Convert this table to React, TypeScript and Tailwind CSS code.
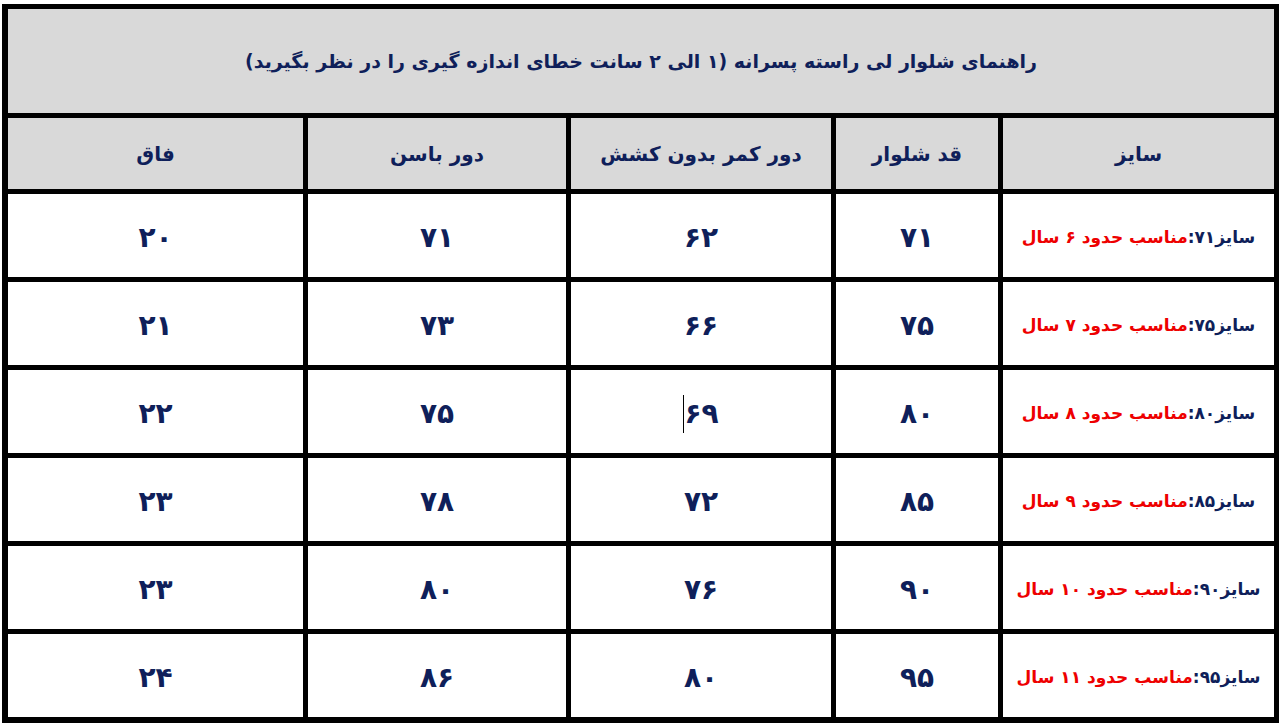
import React from "react";

const navy = "text-[#0f1f5a]";

const rows = [
  { size: "۷۱", age: "۶", len: "۷۱", waist: "۶۲", hip: "۷۱", rise: "۲۰" },
  { size: "۷۵", age: "۷", len: "۷۵", waist: "۶۶", hip: "۷۳", rise: "۲۱" },
  { size: "۸۰", age: "۸", len: "۸۰", waist: "۶۹", hip: "۷۵", rise: "۲۲" },
  { size: "۸۵", age: "۹", len: "۸۵", waist: "۷۲", hip: "۷۸", rise: "۲۳" },
  { size: "۹۰", age: "۱۰", len: "۹۰", waist: "۷۶", hip: "۸۰", rise: "۲۳" },
  { size: "۹۵", age: "۱۱", len: "۹۵", waist: "۸۰", hip: "۸۶", rise: "۲۴" },
];

const headers = ["سایز", "قد شلوار", "دور کمر بدون کشش", "دور باسن", "فاق"];

export default function App() {
  return (
    <div
      className="w-[1280px] h-[728px] bg-white pt-[4px] pl-[2px]"
      style={{ fontFamily: '"DejaVu Sans", sans-serif' }}
    >
      <div
        dir="rtl"
        className="w-[1277px] h-[719px] bg-black p-[5px] grid grid-cols-[271px_162px_260px_258px_295px] grid-rows-[104px_71px_83px_83px_83px_83px_83px_83px] gap-[5px]"
      >
        <div className={`col-span-5 bg-[#d9d9d9] flex items-center justify-center font-bold text-[19px] tracking-[-0.5px] ${navy}`}>
          راهنمای شلوار لی راسته پسرانه (۱ الی ۲ سانت خطای اندازه گیری را در نظر بگیرید)
        </div>
        {headers.map((h) => (
          <div
            key={h}
            className={`bg-[#d9d9d9] flex items-center justify-center font-bold text-[20px] ${navy}`}
          >
            {h}
          </div>
        ))}
        {rows.map((r, i) => (
          <React.Fragment key={i}>
            <div className="bg-white flex items-center justify-center pt-[5px] font-bold text-[17px] tracking-[-0.5px]">
              <span className={navy}>سایز{r.size}:</span>
              <span className="text-[#ee0000]">مناسب حدود {r.age} سال</span>
            </div>
            <div className={`bg-white flex items-center justify-center pt-[5px] font-bold text-[28px] ${navy}`}>
              {r.len}
            </div>
            <div className={`bg-white flex items-center justify-center pt-[5px] font-bold text-[28px] ${navy}`}>
              {r.waist === "۶۹" ? (
                <span className="flex items-center" dir="ltr">
                  <span className="w-[1px] h-[38px] bg-black" />
                  <span>{r.waist}</span>
                </span>
              ) : (
                r.waist
              )}
            </div>
            <div className={`bg-white flex items-center justify-center pt-[5px] font-bold text-[28px] ${navy}`}>
              {r.hip}
            </div>
            <div className={`bg-white flex items-center justify-center pt-[5px] font-bold text-[28px] ${navy}`}>
              {r.rise}
            </div>
          </React.Fragment>
        ))}
      </div>
    </div>
  );
}
